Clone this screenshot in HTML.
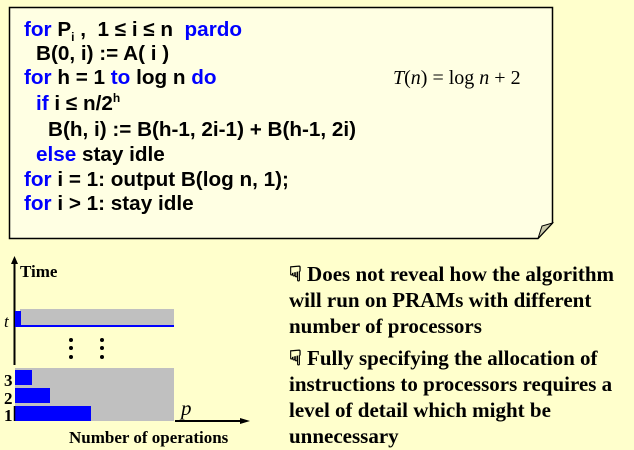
<!DOCTYPE html>
<html><head><style>
body{margin:0;width:634px;height:450px;background:#FFFFCC;position:relative;overflow:hidden;font-family:"Liberation Sans",sans-serif}
.box{position:absolute;left:0;top:0}
.c{position:absolute;left:0;font-weight:bold;font-size:20.7px;color:#000;white-space:pre;line-height:22px}
.c sub,.c sup{line-height:0}
.b{color:#0000FF}
.s{position:absolute;font-family:"Liberation Serif",serif;font-weight:bold;font-size:21px;left:289px;line-height:24px;white-space:nowrap}
</style></head><body>
<svg class="box" width="634" height="450">
<path d="M9.5,7.5 H552.5 V223 L538,238.5 H9.5 Z" fill="#FFFFE3" stroke="#000" stroke-width="1.5"/>
<path d="M552.5,223 L542,226 L538,238.5 Z" fill="#C8C8A8" stroke="#000" stroke-width="1"/>
<line x1="14.5" y1="258" x2="14.5" y2="365" stroke="#000" stroke-width="2"/>
<path d="M11,264 L14.5,256 L18,264 Z" fill="#000"/>
<rect x="20" y="309" width="154" height="16" fill="#C0C0C0"/>
<rect x="15" y="311" width="6" height="15" fill="#0000FF"/>
<rect x="15" y="325" width="159" height="2" fill="#0000FF"/>
<rect x="15" y="368" width="159" height="53" fill="#C0C0C0"/>
<rect x="15" y="370" width="17" height="15" fill="#0000FF"/>
<rect x="15" y="388" width="35" height="15" fill="#0000FF"/>
<rect x="15" y="406" width="76" height="15" fill="#0000FF"/>
<line x1="14.5" y1="406" x2="14.5" y2="421" stroke="#000" stroke-width="1.5"/>
<line x1="175" y1="421" x2="245" y2="421" stroke="#000" stroke-width="2"/>
<path d="M240,418 L250,421 L240,424 Z" fill="#000"/>
<g fill="#000"><circle cx="71" cy="340" r="2"/><circle cx="71" cy="348" r="2"/><circle cx="71" cy="357" r="2"/><circle cx="102" cy="340" r="2"/><circle cx="102" cy="348" r="2"/><circle cx="102" cy="357" r="2"/></g>
<g font-family="Liberation Serif,serif" font-weight="bold" font-size="17">
<text x="20" y="277">Time</text>
<text x="4" y="386">3</text><text x="4" y="404">2</text><text x="4" y="421">1</text>
<text x="69" y="443">Number of operations</text>
</g>
<text x="4" y="327" font-family="Liberation Serif,serif" font-style="italic" font-size="17">t</text>
<text x="181" y="415" font-family="Liberation Serif,serif" font-style="italic" font-size="21">p</text>
<text x="393" y="84" font-family="Liberation Serif,serif" font-size="20"><tspan font-style="italic">T</tspan>(<tspan font-style="italic">n</tspan>) = log <tspan font-style="italic">n</tspan> + 2</text>
</svg>
<div class="c" style="top:19px;left:24px"><span class="b">for</span> P<sub style="font-size:12px">i</sub> ,  1 ≤ i ≤ n  <span class="b">pardo</span></div>
<div class="c" style="top:43px;left:36px">B(0, i) := A( i )</div>
<div class="c" style="top:67px;left:24px"><span class="b">for</span> h = 1 <span class="b">to</span> log n <span class="b">do</span></div>
<div class="c" style="top:93px;left:36px"><span class="b">if</span> i ≤ n/2<sup style="font-size:12px">h</sup></div>
<div class="c" style="top:119px;left:48px">B(h, i) := B(h-1, 2i-1) + B(h-1, 2i)</div>
<div class="c" style="top:144px;left:36px"><span class="b">else</span> stay idle</div>
<div class="c" style="top:169px;left:24px"><span class="b">for</span> i = 1: output B(log n, 1);</div>
<div class="c" style="top:193px;left:24px"><span class="b">for</span> i &gt; 1: stay idle</div>
<div class="s" style="top:262px">☟ Does not reveal how the algorithm</div>
<div class="s" style="top:288px">will run on PRAMs with different</div>
<div class="s" style="top:314px">number of processors</div>
<div class="s" style="top:346px">☟ Fully specifying the allocation of</div>
<div class="s" style="top:372px">instructions to processors requires a</div>
<div class="s" style="top:398px">level of detail which might be</div>
<div class="s" style="top:424px">unnecessary</div>
</body></html>
